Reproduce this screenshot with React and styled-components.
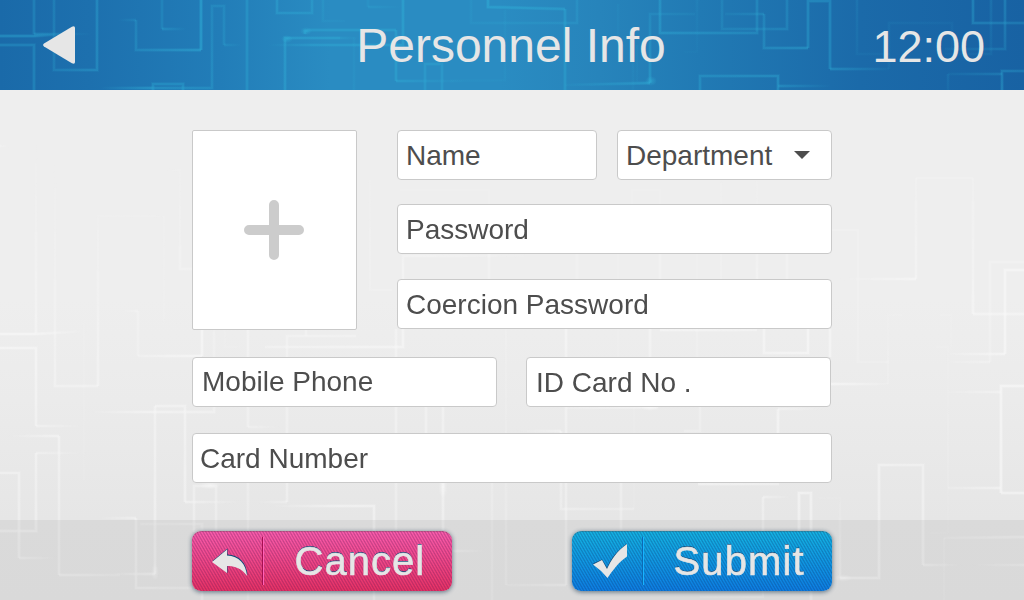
import React from "react";
import styled, { createGlobalStyle, css } from "styled-components";

const GlobalStyle = createGlobalStyle`
  *, *::before, *::after { box-sizing: border-box; }
  body {
    margin: 0;
    font-family: "Liberation Sans", Arial, sans-serif;
    overflow: hidden;
  }
`;

const Screen = styled.div`
  position: relative;
  isolation: isolate;
  width: 1024px;
  height: 600px;
  display: flex;
  flex-direction: column;
  overflow: hidden;
  background: linear-gradient(#eeeeee 0, #eeeeee 300px, #ebebeb 400px, #e6e6e6 520px, #e5e5e5 600px);
`;

const Backdrop = styled.svg`
  position: absolute;
  inset: 0;
  z-index: -1;
  display: block;
`;

const Header = styled.header`
  position: relative;
  isolation: isolate;
  flex: none;
  height: 90px;
  display: grid;
  grid-template-columns: 1fr auto 1fr;
  align-items: center;
  color: #e6e6e6;
  background: linear-gradient(90deg, #1a6aa9 0, #1d70ae 90px, #227db8 220px, #2a8cc2 330px, #2a8cc2 500px, #2784bb 600px, #217ab4 700px, #1b6aa9 860px, #1862a3 1024px);
`;

const BackButton = styled.button`
  justify-self: start;
  margin: 0 0 0 43px;
  padding: 0;
  border: 0;
  background: none;
  line-height: 0;
`;

const Title = styled.h1`
  margin: 2px 2px 0 0;
  font-size: 48px;
  line-height: 56px;
  font-weight: 400;
  white-space: nowrap;
`;

const Clock = styled.time`
  justify-self: end;
  margin: 4px 39px 0 0;
  font-size: 45px;
  line-height: 52px;
`;

const Form = styled.main`
  flex: none;
  width: 640px;
  height: 430px;
  margin-left: 192px;
  padding-top: 40px;
`;

const Row = styled.div`
  display: flex;
  gap: ${(p) => p.$gap || 0}px;
  margin-top: ${(p) => p.$top || 0}px;
`;

const Stack = styled.div`
  flex: 1;
`;

const box = css`
  background: #fff;
  border: 1px solid #c9c9c9;
`;

const Photo = styled.div`
  ${box}
  width: 165px;
  height: 200px;
  border-radius: 2px;
  display: flex;
  align-items: center;
  justify-content: center;
  padding-right: 1px;
`;

const Field = styled.div`
  ${box}
  width: ${(p) => p.$width}px;
  height: 50px;
  border-radius: 4px;
  padding: ${(p) => p.$shift ?? 2}px 21px 0 ${(p) => p.$inset || 8}px;
  display: flex;
  align-items: center;
  justify-content: space-between;
  font-size: 28px;
  line-height: 32px;
  color: #4d4d4d;
  white-space: pre;
`;

const Caret = styled.svg`
  display: block;
  margin-bottom: 2px;
`;

const Footer = styled.footer`
  flex: 1;
  display: flex;
  align-items: flex-start;
  gap: 120px;
  padding: 11px 192px 0;
  background: rgba(0, 0, 0, 0.052);
`;

const tones = {
  pink: { fill: "#ff5fb0, #ec3264", stripe: "90, 20, 80", dark: "#a80f50", light: "#ff62b8" },
  blue: { fill: "#14b8e6, #0d80e6", stripe: "10, 50, 110", dark: "#0c6bb5", light: "#18b4ff" },
};

const ActionButton = styled.button`
  width: 260px;
  height: 60px;
  padding: 0;
  border: 0;
  border-radius: 9px;
  display: flex;
  align-items: center;
  font-family: inherit;
  color: #e6e6e6;
  background:
    repeating-linear-gradient(60deg, rgba(${(p) => tones[p.$tone].stripe}, 0.34) 0, rgba(${(p) => tones[p.$tone].stripe}, 0) 1.3px, rgba(${(p) => tones[p.$tone].stripe}, 0.34) 2.6px),
    linear-gradient(${(p) => tones[p.$tone].fill});
  box-shadow: 0 1px 5px rgba(20, 50, 75, 0.65), inset 0 1px 0 rgba(80, 70, 70, 0.3);
`;

const IconCell = styled.span`
  flex: none;
  width: 72px;
  height: 48px;
  display: flex;
  align-items: center;
  justify-content: center;
  padding: ${(p) => p.$drop}px 0 0 ${(p) => p.$nudge}px;
  border-right: 1px solid ${(p) => tones[p.$tone].light};
  box-shadow: inset -1px 0 0 ${(p) => tones[p.$tone].dark};
`;

const ActionLabel = styled.span`
  flex: none;
  padding-left: ${(p) => p.$inset}px;
  font-size: 40px;
  line-height: 46px;
  letter-spacing: ${(p) => p.$spacing}px;
  -webkit-text-stroke: 0.6px #e6e6e6;
  text-shadow: 0 -1px 0 #124a78;
`;

// Traces: x, y points, then start and end opacity.
const headerTraces = [
  [[34, 0, 34, 34], .5, .5], [[34, 34, 92, 34], .5, 0], [[0, 36, 34, 36], .75, .75], [[34, 36, 65, 34], .7, 0],
  [[0, 45, 34, 45, 34, 90], .55, .55], [[54, 0, 54, 70, 97, 70, 97, 0], .35, .55],
  [[118, 20, 136, 20], 0, .3], [[136, 20, 136, 50, 201, 50], .35, .8], [[201, 50, 201, 0], .95, .95],
  [[162, 0, 162, 29], .4, .4], [[162, 29, 187, 29], .5, 0], [[100, 88, 153, 88], 0, .75],
  [[153, 88, 212, 88, 212, 6, 224, 6, 224, 45], .6, .35], [[224, 45, 242, 45], .35, 0],
  [[153, 90, 153, 84, 183, 84, 183, 90], .65, .65], [[247, 0, 247, 90], .6, .6],
  [[277, 0, 277, 13, 312, 13, 312, 0], .55, .5], [[323, 0, 323, 21, 345, 21], .3, .1],
  [[305, 34, 305, 31, 310, 30, 396, 30], .7, .7], [[396, 30, 396, 81], .7, .7], [[396, 81, 465, 81], .6, 0],
  [[285, 90, 285, 38, 340, 38], .6, .7], [[340, 38, 358, 38], .4, 0], [[268, 45, 310, 45], 0, .5],
  [[310, 45, 403, 45, 403, 0], .6, .7], [[354, 37, 354, 90], .15, .2],
  [[368, 0, 368, 7], .3, .3], [[368, 7, 402, 7], .35, 0], [[425, 90, 425, 64, 442, 64, 442, 90], .6, .6],
  [[488, 0, 488, 7, 565, 9], .8, .65], [[565, 9, 565, 90], .65, .65], [[471, 0, 471, 23, 577, 23, 577, 0], .2, .35],
  [[505, 10, 505, 80, 450, 81], .15, .12], [[565, 85, 650, 83], .1, .75], [[650, 83, 650, 14, 695, 14], .65, .15],
  [[660, 0, 660, 33, 757, 33, 757, 0], .6, .45], [[697, 0, 697, 52, 684, 52], .15, .05],
  [[722, 0, 722, 29, 787, 29, 787, 0], .3, .4], [[725, 14, 764, 14], .15, .4],
  [[764, 14, 764, 48, 808, 48], .4, .65], [[808, 48, 808, 1, 830, 1, 830, 69], .65, .65], [[830, 69, 889, 69], .6, .08],
  [[889, 69, 889, 23, 952, 23, 952, 50], .12, .1], [[857, 0, 857, 54, 890, 54], .2, .08],
  [[973, 0, 973, 23, 1024, 23], .55, .4], [[945, 49, 1005, 49, 1005, 0], .1, .5], [[991, 0, 991, 54, 945, 54], .25, .05],
  [[700, 90, 700, 76, 778, 76, 778, 90], .5, .6], [[778, 86, 832, 86], .55, 0],
  [[948, 90, 948, 74], .12, .2], [[948, 74, 1002, 74], .1, .4], [[1002, 90, 1002, 71, 1024, 71], .6, .4],
  [[633, 55, 633, 90], .15, .1], [[637, 45, 637, 82], .12, .08], [[618, 4, 618, 35], .12, .1],
];

const bodyTraces = [
  [[0, 146, 9, 146], .35, 0], [[36, 145, 36, 333], .05, .65], [[0, 334, 36, 334], .95, .95], [[36, 334, 88, 331], .8, 0],
  [[0, 348, 36, 348, 36, 426], .85, .7], [[36, 426, 85, 426], .6, 0], [[55, 165, 55, 386, 98, 386], .05, .6],
  [[98, 386, 98, 216, 164, 216], .65, .1], [[164, 216, 164, 325, 181, 325], .2, .1], [[27, 228, 27, 278, 22, 278], .1, .1],
  [[165, 170, 180, 170, 180, 269, 192, 269], .1, .4], [[120, 311, 138, 311], 0, .4], [[138, 311, 138, 356], .4, .4],
  [[138, 356, 202, 356], .35, 1], [[202, 356, 202, 329], .9, .9], [[84, 310, 84, 480], .1, .15],
  [[88, 412, 150, 412], 0, .8], [[150, 412, 214, 412, 214, 329], .75, .3], [[248, 329, 248, 427], .6, .55], [[248, 427, 280, 427], .5, 0],
  [[225, 330, 225, 347, 240, 347], .2, .1], [[287, 502, 287, 336, 356, 336], .6, .5], [[306, 330, 306, 336], .5, .5],
  [[265, 347, 403, 347, 403, 329], .5, .8], [[287, 502, 255, 502], .5, 0],
  [[0, 473, 19, 473, 19, 558], .7, .65], [[19, 558, 58, 558], .55, 0], [[0, 531, 36, 531, 36, 453], .7, .65], [[36, 453, 86, 453], .55, 0],
  [[8, 436, 59, 436], 0, .8], [[59, 436, 59, 575], .7, .6], [[59, 575, 120, 575], .7, .25], [[115, 574, 155, 574], .1, .9],
  [[155, 574, 155, 406], .75, .65], [[155, 406, 185, 406, 185, 502], .7, .75], [[185, 502, 242, 502], .75, 0],
  [[98, 518, 136, 518], 0, .65], [[136, 518, 136, 588, 192, 588], .65, .5], [[140, 524, 202, 524, 202, 600], .3, .65],
  [[194, 532, 194, 486, 216, 486, 216, 532], .6, .5], [[248, 483, 248, 600], .5, .3], [[270, 506, 340, 506], 0, .85],
  [[340, 506, 374, 506, 374, 600], .85, .6], [[396, 329, 396, 530], .6, .55], [[426, 407, 426, 433], .65, .65],
  [[443, 407, 443, 530], .65, .75], [[452, 551, 486, 551], .6, 0], [[492, 483, 492, 600], .35, .3],
  [[506, 329, 506, 585], .2, .35], [[506, 585, 566, 585], .2, .6], [[566, 585, 566, 329], .6, .7],
  [[515, 431, 561, 431], 0, .65], [[561, 431, 561, 509, 634, 509], .65, .4], [[634, 509, 634, 407], .15, .15],
  [[621, 483, 621, 530], .6, .6], [[566, 408, 658, 407], .3, .85], [[700, 407, 700, 431, 684, 431], .5, .5],
  [[778, 433, 778, 409], .9, .8], [[778, 409, 828, 409], .6, 0], [[698, 484, 779, 484], .9, .6],
  [[763, 532, 763, 497], .65, .6], [[763, 497, 792, 497], .6, 0], [[799, 532, 799, 493, 811, 493, 811, 532], .95, .9],
  [[818, 498, 840, 498, 840, 578], .1, .5], [[840, 578, 879, 578, 879, 465, 923, 465, 923, 565], .9, .7],
  [[923, 565, 962, 565], .6, 0], [[970, 565, 1024, 565], 0, .5], [[944, 600, 944, 538], .15, .2], [[944, 538, 1024, 537], .2, .7],
  [[811, 591, 811, 600], .7, .7], [[763, 591, 763, 597, 700, 597], .4, .3],
  [[832, 230, 858, 230, 858, 362, 889, 362], .3, .3], [[840, 279, 916, 279], 0, .8], [[916, 279, 916, 178], .6, .25],
  [[916, 178, 973, 178], .3, .3], [[973, 178, 973, 314], .25, .7], [[973, 314, 1024, 314], .75, .75],
  [[990, 362, 990, 262, 1024, 262], .4, .4], [[950, 362, 990, 362], .15, .5], [[1005, 354, 1005, 270, 1024, 270], .9, .9],
  [[950, 354, 1005, 354], .15, .9], [[830, 384, 888, 384], 1, .15], [[888, 384, 888, 315, 902, 315], .25, .15],
  [[940, 315, 951, 315, 951, 350], .15, .1], [[936, 347, 948, 347, 948, 488], .15, .2], [[948, 488, 1001, 488], .25, .8], [[948, 392, 1001, 392], .1, .65],
  [[1001, 493, 1001, 386, 1024, 386], 1, 1], [[1001, 493, 1024, 493], .9, .9], [[948, 488, 948, 533, 930, 533], .15, .1],
  [[764, 329, 764, 353, 808, 353, 808, 329], .75, .85], [[830, 329, 830, 357], .85, .85], [[660, 330, 757, 330], .8, .6],
  [[650, 329, 650, 357], .65, .65], [[618, 329, 618, 357], .2, .2], [[697, 329, 697, 357], .3, .3],
  [[370, 180, 370, 290, 392, 290], .15, .3], [[400, 190, 489, 190, 489, 204], .25, .25], [[403, 280, 403, 256, 525, 256], .6, .1],
  [[489, 254, 489, 280], .5, .5], [[577, 254, 577, 280], .35, .35], [[618, 254, 618, 280], .15, .15], [[660, 254, 660, 280], .4, .4],
  [[697, 254, 697, 280], .25, .25], [[721, 180, 721, 280], .1, .3], [[757, 180, 757, 280], .1, .5], [[787, 254, 787, 280], .5, .5],
  [[632, 204, 632, 190, 660, 190, 660, 204], .15, .15],
];

function Traces({ id, items, color, strength = 1 }) {
  return (
    <g fill="none" stroke={color} opacity={strength}>
      {items.map(([pts, from, to], i) => {
        const n = pts.length;
        const gid = `${id}${i}`;
        const stroke = from === to ? color : `url(#${gid})`;
        const opacity = from === to ? from : 1;
        const d = `M${pts.join(" ")}`;
        return (
          <g key={gid} opacity={opacity}>
            {from !== to && (
              <linearGradient id={gid} gradientUnits="userSpaceOnUse" x1={pts[0]} y1={pts[1]} x2={pts[n - 2]} y2={pts[n - 1]}>
                <stop offset="0" stopColor={color} stopOpacity={from} />
                <stop offset="1" stopColor={color} stopOpacity={to} />
              </linearGradient>
            )}
            <path d={d} stroke={stroke} strokeWidth="3.6" opacity=".4" />
            <path d={d} stroke={stroke} strokeWidth="2" opacity=".6" />
          </g>
        );
      })}
    </g>
  );
}

function Glow({ id, color, spots, strength }) {
  return (
    <g>
      <radialGradient id={id}>
        <stop offset="0" stopColor={color} stopOpacity={strength} />
        <stop offset="1" stopColor={color} stopOpacity="0" />
      </radialGradient>
      {spots.map(([x, y, rx, ry]) => (
        <ellipse key={`${x}-${y}`} cx={x} cy={y} rx={rx} ry={ry} fill={`url(#${id})`} />
      ))}
    </g>
  );
}

export default function App() {
  return (
    <>
      <GlobalStyle />
      <Screen>
        <Backdrop width="1024" height="600" aria-hidden="true">
          <Traces id="body" items={bodyTraces} color="#fff" strength={0.56} />
          <Glow id="bodyGlow" color="#fff" strength={0.4} spots={[[210, 485, 11, 5], [155, 572, 4, 9], [443, 487, 5, 12], [843, 578, 10, 4], [650, 408, 10, 3]]} />
        </Backdrop>

        <Header>
          <Backdrop width="1024" height="90" aria-hidden="true">
            <Traces id="head" items={headerTraces} color="#31b3da" strength={0.7} />
            <Glow id="headGlow" color="#31b3d9" strength={0.5} spots={[[287, 39, 6, 4], [306, 31, 6, 4], [651, 81, 6, 5]]} />
          </Backdrop>
          <BackButton aria-label="Back">
            <svg width="32" height="38" viewBox="0 0 32 38">
              <path d="M1 17.4 28.9.7Q32-.7 32 2V36Q32 38.7 28.9 37.3L1 20.6Q-.8 19 1 17.4Z" fill="#e6e6e6" />
            </svg>
          </BackButton>
          <Title>Personnel Info</Title>
          <Clock>12:00</Clock>
        </Header>

        <Form>
          <Row $gap={40}>
            <Photo>
              <svg width="60" height="60" viewBox="0 0 60 60">
                <path d="M30 5V55M5 30H55" stroke="#ccc" strokeWidth="10" strokeLinecap="round" />
              </svg>
            </Photo>
            <Stack>
              <Row $gap={20}>
                <Field $width={200}>Name</Field>
                <Field $width={215}>
                  Department
                  <Caret width="16" height="8" viewBox="0 0 16 8">
                    <path d="M0 0H16L8 8Z" fill="#4d4d4d" />
                  </Caret>
                </Field>
              </Row>
              <Row $top={24}>
                <Field $width={435}>Password</Field>
              </Row>
              <Row $top={25}>
                <Field $width={435}>Coercion Password</Field>
              </Row>
            </Stack>
          </Row>
          <Row $top={27} $gap={29}>
            <Field $width={305} $shift={0} $inset={9}>Mobile Phone</Field>
            <Field $width={305} $shift={1} $inset={9}>ID Card No .</Field>
          </Row>
          <Row $top={26}>
            <Field $width={640} $inset={7}>Card Number</Field>
          </Row>
        </Form>

        <Footer>
          <ActionButton $tone="pink">
            <IconCell $tone="pink" $nudge={4} $drop={4}>
              <svg width="36" height="30" viewBox="0 0 36 30">
                <path d="M0 13 15 .5V6.500C27 7 34 15 35 27C30 20 23 17.500 15 17.500V25Z" fill="#124a78" transform="translate(.5 0)" />
                <path d="M0 14 15 1.500V7.500C27 8 34 16 35 28C30 20.500 23 18 15 18V25Z" fill="#e6e6e6" />
              </svg>
            </IconCell>
            <ActionLabel $inset={30.5} $spacing={1}>Cancel</ActionLabel>
          </ActionButton>
          <ActionButton $tone="blue">
            <IconCell $tone="blue" $nudge={7} $drop={0}>
              <svg width="36" height="36" viewBox="0 0 36 36">
                <path d="M0 21 9 17 14 25C18 16 24 8 34 1V13C26 19 20 26 14.500 34Q8 27 0 21Z" fill="#124a78" transform="translate(0 -.6)" />
                <path d="M0 21.500 9 17 14 26C18 17 24 8 34 1V13.500C26 19 20 27 14.500 35Q8 27 0 21.500Z" fill="#e6e6e6" />
              </svg>
            </IconCell>
            <ActionLabel $inset={29.5} $spacing={1.1}>Submit</ActionLabel>
          </ActionButton>
        </Footer>
      </Screen>
    </>
  );
}
